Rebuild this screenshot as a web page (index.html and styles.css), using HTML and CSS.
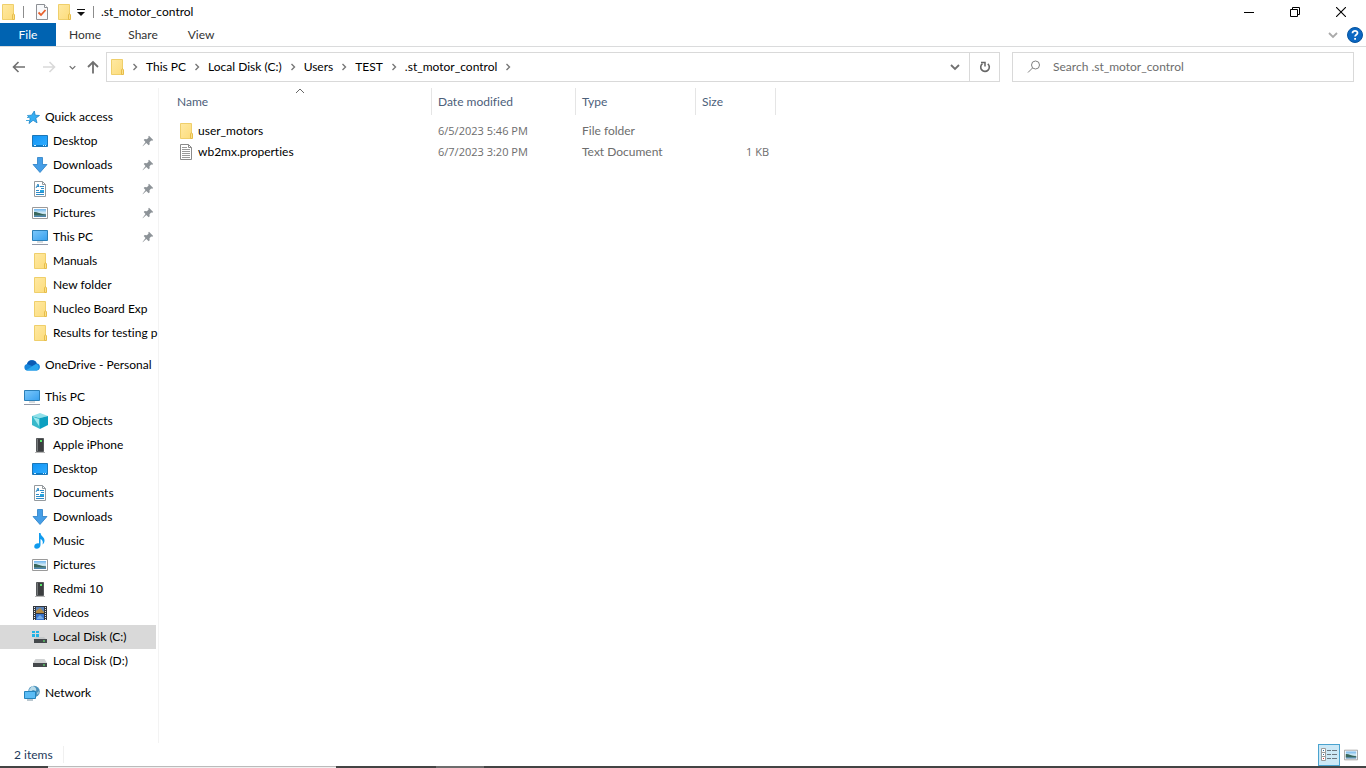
FILE: index.html
```html
<!DOCTYPE html>
<html lang="en">
<head>
<meta charset="utf-8">
<title>.st_motor_control</title>
<link rel="stylesheet" href="styles.css">
</head>
<body>
<svg class="defs" aria-hidden="true">
  <defs>
    <linearGradient id="gFolder" x1="0" y1="0" x2="1" y2="1"><stop offset="0" stop-color="#ffe9a2"/><stop offset="1" stop-color="#fcdc7c"/></linearGradient>
    <linearGradient id="gScreen" x1="0" y1="0" x2="1" y2="1"><stop offset="0" stop-color="#7cc8fb"/><stop offset="1" stop-color="#37a0ee"/></linearGradient>
    <linearGradient id="gDesk" x1="0" y1="0" x2="1" y2="1"><stop offset="0" stop-color="#0f93f5"/><stop offset="1" stop-color="#32aeff"/></linearGradient>
    <linearGradient id="gPic" x1="0" y1="0" x2="0" y2="1"><stop offset="0" stop-color="#6db4ee"/><stop offset=".5" stop-color="#d8eef5"/><stop offset="1" stop-color="#3776a5"/></linearGradient>
  </defs>
  <symbol id="folder" viewBox="0 0 16 16"><path d="M2.500.5h11v15h-11z" fill="url(#gFolder)" stroke="#efcf6b"/><path d="M12.500 15.500V11l1-1.500 1 1.500v4.500z" fill="#fbe08a" stroke="#e7bd4a"/></symbol>
  <symbol id="check" viewBox="0 0 16 16"><path d="M2.500.5h8l3 3v12h-11z" fill="#f8f9fb" stroke="#8d9095"/><path d="M10.500.5v3h3" fill="#fff" stroke="#8d9095"/><path d="M4.500 8.500 7 11l4.500-5" fill="none" stroke="#e8602c" stroke-width="1.800"/></symbol>
  <symbol id="star" viewBox="0 0 16 16"><path d="m10.300 2 .9 4.200 4.300.3-3.700 2.700 1.200 4.600-3.900-2.500L5 14.500l1.200-4.700L3.500 6.500l4.100-.3z" fill="#37aef2" stroke="#1883c9" stroke-width=".8"/><path d="M3 8.500h3M2 11.500h4M4 6.500h2" stroke="#48a9dc"/></symbol>
  <symbol id="desktop" viewBox="0 0 16 16"><path d="M.5 2.500h15v11H.5z" fill="url(#gDesk)" stroke="#1b77b8"/><path d="M1 12.500h14" stroke="#087ccb"/><path d="M2 12.500h2M11 12.500h1M13 12.500h1" stroke="#d5f0ff"/></symbol>
  <symbol id="down" viewBox="0 0 16 16"><path d="M5.500.5h5v7h4.500l-7 8-7-8h4.500z" fill="#459ee7" stroke="#287fc5" stroke-width=".8"/></symbol>
  <symbol id="document" viewBox="0 0 16 16"><path d="M2.500.5h8l3 3v12h-11z" fill="#fff" stroke="#959a9e"/><path d="M10.500.5v3h3" fill="none" stroke="#959a9e"/><path d="M4 7 6 3l1 3M5 5.500h2M8 5.500h4M9 7.500h3M4 9.500h3M4 11.500h8M4 13.500h8" fill="none" stroke="#2f8cc7"/><path d="M8 9h4v2H8z" fill="#27a4df"/></symbol>
  <symbol id="picture" viewBox="0 0 16 16"><path d="M.5 2.500h15v11H.5z" fill="#fff" stroke="#9a9a9a"/><path d="M2 4h12v8H2z" fill="url(#gPic)"/><path d="M2 7c3-.5 6 2 12 2.500v1H2z" fill="#38675c"/></symbol>
  <symbol id="pc" viewBox="0 0 16 16"><path d="M.5 1.500h15v10H.5z" fill="url(#gScreen)" stroke="#2b7fb7"/><path d="M5 13h6" stroke="#acb5bd"/><path d="M0 15.500h16" stroke="#9299a8"/></symbol>
  <symbol id="cloud" viewBox="0 0 16 16"><path d="M3.300 13.500A3.300 3.300 0 0 1 3 7a5.200 5.200 0 0 1 9.800-.6A3.600 3.600 0 0 1 13 13.500z" fill="#1685da"/><path d="M3 7a5.200 5.200 0 0 1 9.800-.6L8 9z" fill="#0a5ab4"/><path d="M2 13.200 12 7a3.600 3.600 0 0 1 1 6.500H3.300z" fill="#2aa6ed"/></symbol>
  <symbol id="cube" viewBox="0 0 16 16"><path d="M0 3 8 0l8 3-8 2z" fill="#91e1ea"/><path d="M0 3l8 2v11l-8-4z" fill="#38b9cb"/><path d="m8 5 8-2v9l-8 4z" fill="#0c9fc0"/><path d="m1 4 6 2v7z" fill="#9ce9ee"/></symbol>
  <symbol id="device" viewBox="0 0 16 16"><path d="M4.500 1.500h7v13h-7z" fill="#3c3e40" stroke="#55585a"/><path d="M5 2h1v12H5z" fill="#75787a"/><path d="M8 3h2v2H8z" fill="#58e36a"/><path d="M3 15.500h10" stroke="#b5b5b5"/></symbol>
  <symbol id="music" viewBox="0 0 16 16"><path d="M7 0h1.500c.5 3.500 4 3.800 4 7.500 0 2-.8 3.200-2 4 1-3-.2-4.800-2-5.500V12c0 2.300-1.800 3.700-3.800 3.700S2 14.500 2.300 13C2.700 11 5 10 7 10.500z" fill="#109bee"/></symbol>
  <symbol id="video" viewBox="0 0 16 16"><path d="M1 1h14v14H1z" fill="#33383e"/><path d="M4 2h8v6H4z" fill="#5b83b8"/><path d="M4 9h8v6H4z" fill="#3975cf"/><path d="m4 6 4-3 4 4v1H4z" fill="#b58a42"/><path d="m5 13 3-3 4 4H5z" fill="#78b0e8"/><path d="M2.500 2v13M13.500 2v13" stroke="#eee" stroke-dasharray="1 1"/></symbol>
  <symbol id="diskd" viewBox="0 0 16 16"><path d="M3.500 6h9l2.500 4H1z" fill="#d0d2d3"/><path d="M1 10h14v4H1z" fill="#45494c"/><path d="M11 12h2" stroke="#62ff72"/></symbol>
  <symbol id="diskc" viewBox="0 0 16 16"><path d="M0 2h3v2H0zM4 2h3v2H4zM0 5h3v3H0zM4 5h3v3H4z" fill="#22b3e5"/><path d="M4 8h8l3 3H1z" fill="#c6c9ca"/><path d="M2 10h13v4H2z" fill="#45494c"/><path d="M11 12h2" stroke="#62ff72"/></symbol>
  <symbol id="network" viewBox="0 0 16 16"><circle cx="10" cy="6.500" r="5.800" fill="#4a91bb"/><path d="M8 1c3 0 5 3 4 5L9 5 6 7 5 5zM13 8l2-2-1 4z" fill="#b9dbe9"/><path d="M.5 6.500h11v7H.5z" fill="#5bbcf5" stroke="#2483bc"/><path d="M3 15h6" stroke="#768f9f"/></symbol>
  <symbol id="textfile" viewBox="0 0 16 16"><path d="M2.500.5h8l3 3v12h-11z" fill="#fff" stroke="#8a8a8a"/><path d="M10.500.5v3h3" fill="none" stroke="#8a8a8a"/><path d="M4 3.500h5M4 5.500h8M4 7.500h8M4 9.500h8M4 11.500h8M4 13.500h8" stroke="#9a9a9a"/></symbol>
  <symbol id="pin" viewBox="0 0 12 12"><path d="m7 .8 4.200 4.200-1 .7-1-.2-1.700 1.800.2 2-1 1-2.400-2.400L.8 11.200l-.2-.3L3.500 7 1.700 5l1-1 2.200.2L6.600 2.600l-.3-1z" fill="#8d9398"/></symbol>
  <symbol id="chev" viewBox="0 0 8 8"><path d="m2.500 1 3 3-3 3" fill="none" stroke="#777" stroke-width="1.400"/></symbol>
  <symbol id="chevdown" viewBox="0 0 10 10"><path d="m1 3 4 4 4-4" fill="none" stroke="currentColor" stroke-width="1.800"/></symbol>
</svg>

<header class="titlebar">
  <svg class="icon"><use href="#folder"/></svg>
  <span class="rule"></span>
  <button class="quick" aria-label="Properties"><svg class="icon"><use href="#check"/></svg></button>
  <button class="quick" aria-label="New folder"><svg class="icon"><use href="#folder"/></svg></button>
  <button class="more" aria-label="Customize Quick Access Toolbar"><svg width="8" height="8" viewBox="0 0 8 8"><path d="M0 1.500h8" stroke="#111"/><path d="M0 4h8L4 8z" fill="#111"/></svg></button>
  <span class="rule"></span>
  <h1 class="title">.st_motor_control</h1>
  <div class="caption">
    <button aria-label="Minimize"><svg width="10" height="10" viewBox="0 0 10 10"><path d="M0 5.500h10" stroke="#000"/></svg></button>
    <button aria-label="Restore"><svg width="10" height="10" viewBox="0 0 10 10"><path d="M.5 2.500h7v7h-7zM2.500 2.500v-2h7v7h-2" fill="none" stroke="#000"/></svg></button>
    <button aria-label="Close"><svg width="10" height="10" viewBox="0 0 10 10"><path d="m0 0 10 10M10 0 0 10" stroke="#000" stroke-width="1.100"/></svg></button>
  </div>
</header>

<nav class="ribbon" aria-label="Ribbon">
  <button class="tab file">File</button>
  <button class="tab">Home</button>
  <button class="tab">Share</button>
  <button class="tab">View</button>
  <button class="tool expand" aria-label="Expand the ribbon"><svg width="10" height="10"><use href="#chevdown"/></svg></button>
  <button class="tool" aria-label="Help"><svg width="16" height="16" viewBox="0 0 16 16"><circle cx="8" cy="8" r="7.500" fill="#0b67c2" stroke="#07549f"/><path d="M5.500 6.200C5.500 3 10.600 3.200 10.500 6c0 1.800-2.400 1.700-2.400 3.500M8.100 11v1.800" fill="none" stroke="#fff" stroke-width="1.800"/></svg></button>
</nav>

<div class="navbar">
  <div class="history">
    <button aria-label="Back"><svg width="14" height="14" viewBox="0 0 14 14"><path d="M13 7H1.500M6.500 2l-5 5 5 5" fill="none" stroke="currentColor" stroke-width="1.600"/></svg></button>
    <button class="forward" aria-label="Forward"><svg width="14" height="14" viewBox="0 0 14 14"><path d="M1 7h11.500M7.500 2l5 5-5 5" fill="none" stroke="currentColor" stroke-width="1.600"/></svg></button>
    <button class="recent" aria-label="Recent locations"><svg width="7" height="7"><use href="#chevdown"/></svg></button>
    <button class="up" aria-label="Up"><svg width="14" height="14" viewBox="0 0 14 14"><path d="M7 13.500V2M2 7l5-5 5 5" fill="none" stroke="currentColor" stroke-width="1.800"/></svg></button>
  </div>
  <div class="address">
    <svg class="icon"><use href="#folder"/></svg>
    <svg class="chev"><use href="#chev"/></svg><a href="#">This PC</a>
    <svg class="chev"><use href="#chev"/></svg><a href="#">Local Disk (C:)</a>
    <svg class="chev"><use href="#chev"/></svg><a href="#">Users</a>
    <svg class="chev"><use href="#chev"/></svg><a href="#">TEST</a>
    <svg class="chev"><use href="#chev"/></svg><a href="#">.st_motor_control</a>
    <svg class="chev"><use href="#chev"/></svg>
    <button class="previous" aria-label="Previous locations"><svg width="10" height="10"><use href="#chevdown"/></svg></button>
    <button class="refresh" aria-label="Refresh"><svg width="12" height="12" viewBox="0 0 12 12"><path d="M8.800 2.800A4.300 4.300 0 1 1 3.500 2.600" fill="none" stroke="#666" stroke-width="1.600"/><path d="M2 1.500h4v4" fill="none" stroke="#666" stroke-width="1.500"/></svg></button>
  </div>
  <label class="search">
    <svg width="14" height="14" viewBox="0 0 14 14"><circle cx="8.500" cy="5" r="4" fill="none" stroke="#808080"/><path d="M5.500 8 1 12.500" stroke="#808080"/></svg>
    <input type="search" placeholder="Search .st_motor_control" aria-label="Search .st_motor_control">
  </label>
</div>

<div class="body">
  <nav class="tree" aria-label="Navigation pane">
    <section>
      <a class="root" href="#"><svg class="icon"><use href="#star"/></svg><span>Quick access</span></a>
      <a href="#"><svg class="icon"><use href="#desktop"/></svg><span>Desktop</span><svg class="pin"><use href="#pin"/></svg></a>
      <a href="#"><svg class="icon"><use href="#down"/></svg><span>Downloads</span><svg class="pin"><use href="#pin"/></svg></a>
      <a href="#"><svg class="icon"><use href="#document"/></svg><span>Documents</span><svg class="pin"><use href="#pin"/></svg></a>
      <a href="#"><svg class="icon"><use href="#picture"/></svg><span>Pictures</span><svg class="pin"><use href="#pin"/></svg></a>
      <a href="#"><svg class="icon"><use href="#pc"/></svg><span>This PC</span><svg class="pin"><use href="#pin"/></svg></a>
      <a href="#"><svg class="icon"><use href="#folder"/></svg><span>Manuals</span></a>
      <a href="#"><svg class="icon"><use href="#folder"/></svg><span>New folder</span></a>
      <a href="#"><svg class="icon"><use href="#folder"/></svg><span>Nucleo Board Exp</span></a>
      <a href="#"><svg class="icon"><use href="#folder"/></svg><span>Results for testing p</span></a>
    </section>
    <section>
      <a class="root" href="#"><svg class="icon"><use href="#cloud"/></svg><span>OneDrive - Personal</span></a>
    </section>
    <section>
      <a class="root" href="#"><svg class="icon"><use href="#pc"/></svg><span>This PC</span></a>
      <a href="#"><svg class="icon"><use href="#cube"/></svg><span>3D Objects</span></a>
      <a href="#"><svg class="icon"><use href="#device"/></svg><span>Apple iPhone</span></a>
      <a href="#"><svg class="icon"><use href="#desktop"/></svg><span>Desktop</span></a>
      <a href="#"><svg class="icon"><use href="#document"/></svg><span>Documents</span></a>
      <a href="#"><svg class="icon"><use href="#down"/></svg><span>Downloads</span></a>
      <a href="#"><svg class="icon"><use href="#music"/></svg><span>Music</span></a>
      <a href="#"><svg class="icon"><use href="#picture"/></svg><span>Pictures</span></a>
      <a href="#"><svg class="icon"><use href="#device"/></svg><span>Redmi 10</span></a>
      <a href="#"><svg class="icon"><use href="#video"/></svg><span>Videos</span></a>
      <a class="selected" href="#"><svg class="icon"><use href="#diskc"/></svg><span>Local Disk (C:)</span></a>
      <a href="#"><svg class="icon"><use href="#diskd"/></svg><span>Local Disk (D:)</span></a>
    </section>
    <section>
      <a class="root" href="#"><svg class="icon"><use href="#network"/></svg><span>Network</span></a>
    </section>
  </nav>
  <main class="files">
    <table>
      <colgroup><col class="c-name"><col class="c-date"><col class="c-type"><col class="c-size"></colgroup>
      <thead>
        <tr>
          <th class="sorted" aria-sort="ascending">Name<svg class="sort" viewBox="0 0 10 6"><path d="m1 5 4-4 4 4" fill="none" stroke="#666"/></svg></th>
          <th>Date modified</th><th>Type</th><th>Size</th>
        </tr>
      </thead>
      <tbody>
        <tr><td><div class="name"><svg class="icon"><use href="#folder"/></svg>user_motors</div></td><td class="date">6/5/2023 5:46 PM</td><td>File folder</td><td></td></tr>
        <tr><td><div class="name"><svg class="icon"><use href="#textfile"/></svg>wb2mx.properties</div></td><td class="date">6/7/2023 3:20 PM</td><td>Text Document</td><td class="size">1 KB</td></tr>
      </tbody>
    </table>
  </main>
</div>

<footer class="status">
  <span class="count">2 items</span>
  <button class="view active" aria-label="Details view"><svg width="16" height="14" viewBox="0 0 16 14"><path d="M.5.5h4v4h-4zM.5 4.500h4v4h-4zM.5 8.500h4v4h-4z" fill="#fff" stroke="#9a9a9a"/><path d="M6 2.500h4M11 2.500h5M6 6.500h4M11 6.500h5M6 10.500h4M11 10.500h5" stroke="#6b7780"/><path d="M2 2h1v1H2zM2 6h1v1H2z" fill="#336a9a"/><path d="M2 10h1v1H2z" fill="#d33"/></svg></button>
  <button class="view" aria-label="Large icons view"><svg width="14" height="14"><use href="#picture"/></svg></button>
</footer>
<div class="taskbar"><span class="t-start"></span><span class="t-search"></span><span class="t-apps"></span><span class="t-active"></span></div>
</body>
</html>
```
FILE: styles.css
```css
* { box-sizing: border-box; }
body {
  margin: 0;
  min-height: 100vh;
  display: flex;
  flex-direction: column;
  background: #fff;
  color: #000;
  font: 12px/16px Lato, "Open Sans", sans-serif;
  font-variant-ligatures: none;
}
button, input { font: inherit; color: inherit; border: 0; padding: 0; margin: 0; background: none; }
button { display: flex; align-items: center; justify-content: center; }
a { color: inherit; text-decoration: none; }
svg { display: block; flex: none; }
.defs { position: absolute; width: 0; height: 0; }
.icon { width: 16px; height: 16px; }

.titlebar { display: flex; align-items: center; height: 23px; }
.rule { width: 1px; height: 12px; margin: 0 7px 0 6px; background: #8c8c8c; }
.titlebar > .icon { margin-right: 1px; }
.quick { width: 22px; height: 23px; }
.more { width: 12px; }
.title { margin: 0; font-size: 12px; font-weight: 400; line-height: 16px; }
.caption { display: flex; margin-left: auto; margin-right: 2px; }
.caption button { width: 46px; height: 20px; }

.ribbon { display: flex; height: 24px; border-bottom: 1px solid #dadbdc; color: #333; }
.tab { padding: 0 12px; min-width: 58px; }
.tab.file { min-width: 56px; background: #0063b1; color: #fff; }
.tool { width: 22px; }
.tool.expand { margin-left: auto; color: #aaa; }

.navbar { display: flex; gap: 12px; padding: 5px 12px 6px 0; }
.history { display: flex; width: 94px; padding-left: 12px; color: #707070; }
.forward { margin-left: 16px; color: #d9d9d9; }
.recent { margin-left: 13px; }
.up { margin-left: 10px; }
.address { display: flex; align-items: center; flex: 1; height: 30px; border: 1px solid #d9d9d9; padding-left: 2px; }
.chev { width: 8px; height: 8px; margin: 0 7px; }
.address .icon + .chev { margin-left: 6px; }
.previous { width: 28px; height: 28px; margin-left: auto; color: #707070; }
.refresh { width: 30px; height: 28px; border-left: 1px solid #d9d9d9; }
.search { display: flex; align-items: center; gap: 12px; width: 342px; height: 30px; border: 1px solid #d9d9d9; padding-left: 14px; color: #666; }
.search input { flex: 1; outline: none; }
.search input::placeholder { color: #6d6d6d; opacity: 1; }

.body { display: flex; flex: 1; }
.tree { width: 159px; flex: none; padding: 17px 2px 0 0; border-right: 1px solid #f3f3f3; }
.tree section { margin-bottom: 8px; }
.tree a { display: flex; align-items: center; gap: 5px; height: 24px; padding-left: 32px; }
.tree a.root { padding-left: 24px; }
.tree span { flex: 1; white-space: nowrap; }
.tree .selected { background: #d9d9d9; }
.pin { width: 12px; height: 12px; margin-right: 2px; }
.files { flex: 1; min-width: 0; }
table { table-layout: fixed; width: 617px; border-collapse: separate; border-spacing: 0; }
.c-name { width: 273px; }
.c-date { width: 144px; }
.c-type { width: 120px; }
.c-size { width: 80px; }
th { height: 27px; padding: 0 6px; border-right: 1px solid #e5e5e5; color: #4c607a; font-weight: 400; text-align: left; }
.sorted { position: relative; padding-left: 18px; }
.sort { position: absolute; top: 0; left: 50%; width: 10px; height: 6px; }
tbody::before { content: ""; display: block; height: 5px; }
td { height: 21px; padding: 0 6px; color: #6d6d6d; white-space: nowrap; }
td:first-child { padding-left: 19px; color: #000; }
.date, .size { font-family: "Open Sans", sans-serif; font-size: 11px; }
td.size { padding-right: 7px; text-align: right; }
.name { display: flex; align-items: center; gap: 4px; }

.status { display: flex; align-items: center; height: 23px; padding: 0 4px 0 14px; color: #1e395b; }
.count { padding: 1px 10px 0 0; border-right: 1px solid #f0f0f0; margin-right: auto; }
.view { width: 22px; height: 22px; }
.view.active { background: #cce8f6; border: 1px solid #4aa3cf; }
.taskbar { display: flex; height: 2px; background: #444; }
.t-start { width: 48px; }
.t-search { width: 288px; background: #f0f0f0; border-top: 1px solid #bbb; }
.t-apps { width: 100px; }
.t-active { width: 48px; background: #6d6d6d; }
```
